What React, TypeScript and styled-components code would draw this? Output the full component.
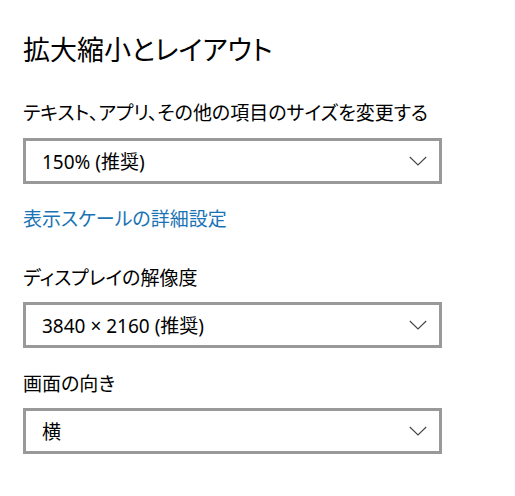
import styled, { createGlobalStyle } from "styled-components";

const GlobalStyle = createGlobalStyle`
    html, body {
        margin: 0;
        padding: 0;
        background: #ffffff;
    }

    body {
        font-family: "Noto Sans", "Noto Sans CJK JP", sans-serif;
        font-feature-settings: "palt";
        color: #000000;
    }
`;

const Page = styled.div`
    display: flex;
    flex-direction: column;
    padding: 32px 0 0 23px;
`;

const Title = styled.h1`
    margin: 0 0 31px;
    font-size: 27px;
    font-weight: 400;
    line-height: 36px;
`;

const Label = styled.div<{ $gap: number }>`
    margin: 0 0 ${(p) => p.$gap}px;
    font-size: 19px;
    line-height: 28px;
`;

const Combo = styled.div<{ $after: number }>`
    box-sizing: border-box;
    display: flex;
    align-items: center;
    justify-content: space-between;
    width: 419px;
    height: 46px;
    margin-bottom: ${(p) => p.$after}px;
    padding: 0 12px 0 16px;
    border: 3px solid #999999;
    background: #ffffff;
    font-size: 19px;
`;

const Chevron = styled.svg`
    width: 18px;
    height: 10px;
    flex: none;
`;

const Link = styled.a`
    align-self: flex-start;
    margin: 0 0 31px;
    color: #1a73b5;
    font-size: 19px;
    line-height: 28px;
    text-decoration: none;
`;

type DropdownProps = {
    value: string;
    after: number;
};

const Dropdown: React.FC<DropdownProps> = ({ value, after }) => (
    <Combo $after={after}>
        <span>{value}</span>
        <Chevron viewBox="0 0 18 10">
            <path d="M0.8 1 L9 9 L17.2 1" fill="none" stroke="#444444" strokeWidth="1.1" />
        </Chevron>
    </Combo>
);

const App: React.FC = () => {
    return (
        <>
            <GlobalStyle />
            <Page>
                <Title>拡大縮小とレイアウト</Title>

                <Label $gap={11}>テキスト、アプリ、その他の項目のサイズを変更する</Label>
                <Dropdown value="150% (推奨)" after={21} />

                <Link href="#">表示スケールの詳細設定</Link>

                <Label $gap={10}>ディスプレイの解像度</Label>
                <Dropdown value="3840 × 2160 (推奨)" after={22} />

                <Label $gap={10}>画面の向き</Label>
                <Dropdown value="横" after={0} />
            </Page>
        </>
    );
};

export default App;
